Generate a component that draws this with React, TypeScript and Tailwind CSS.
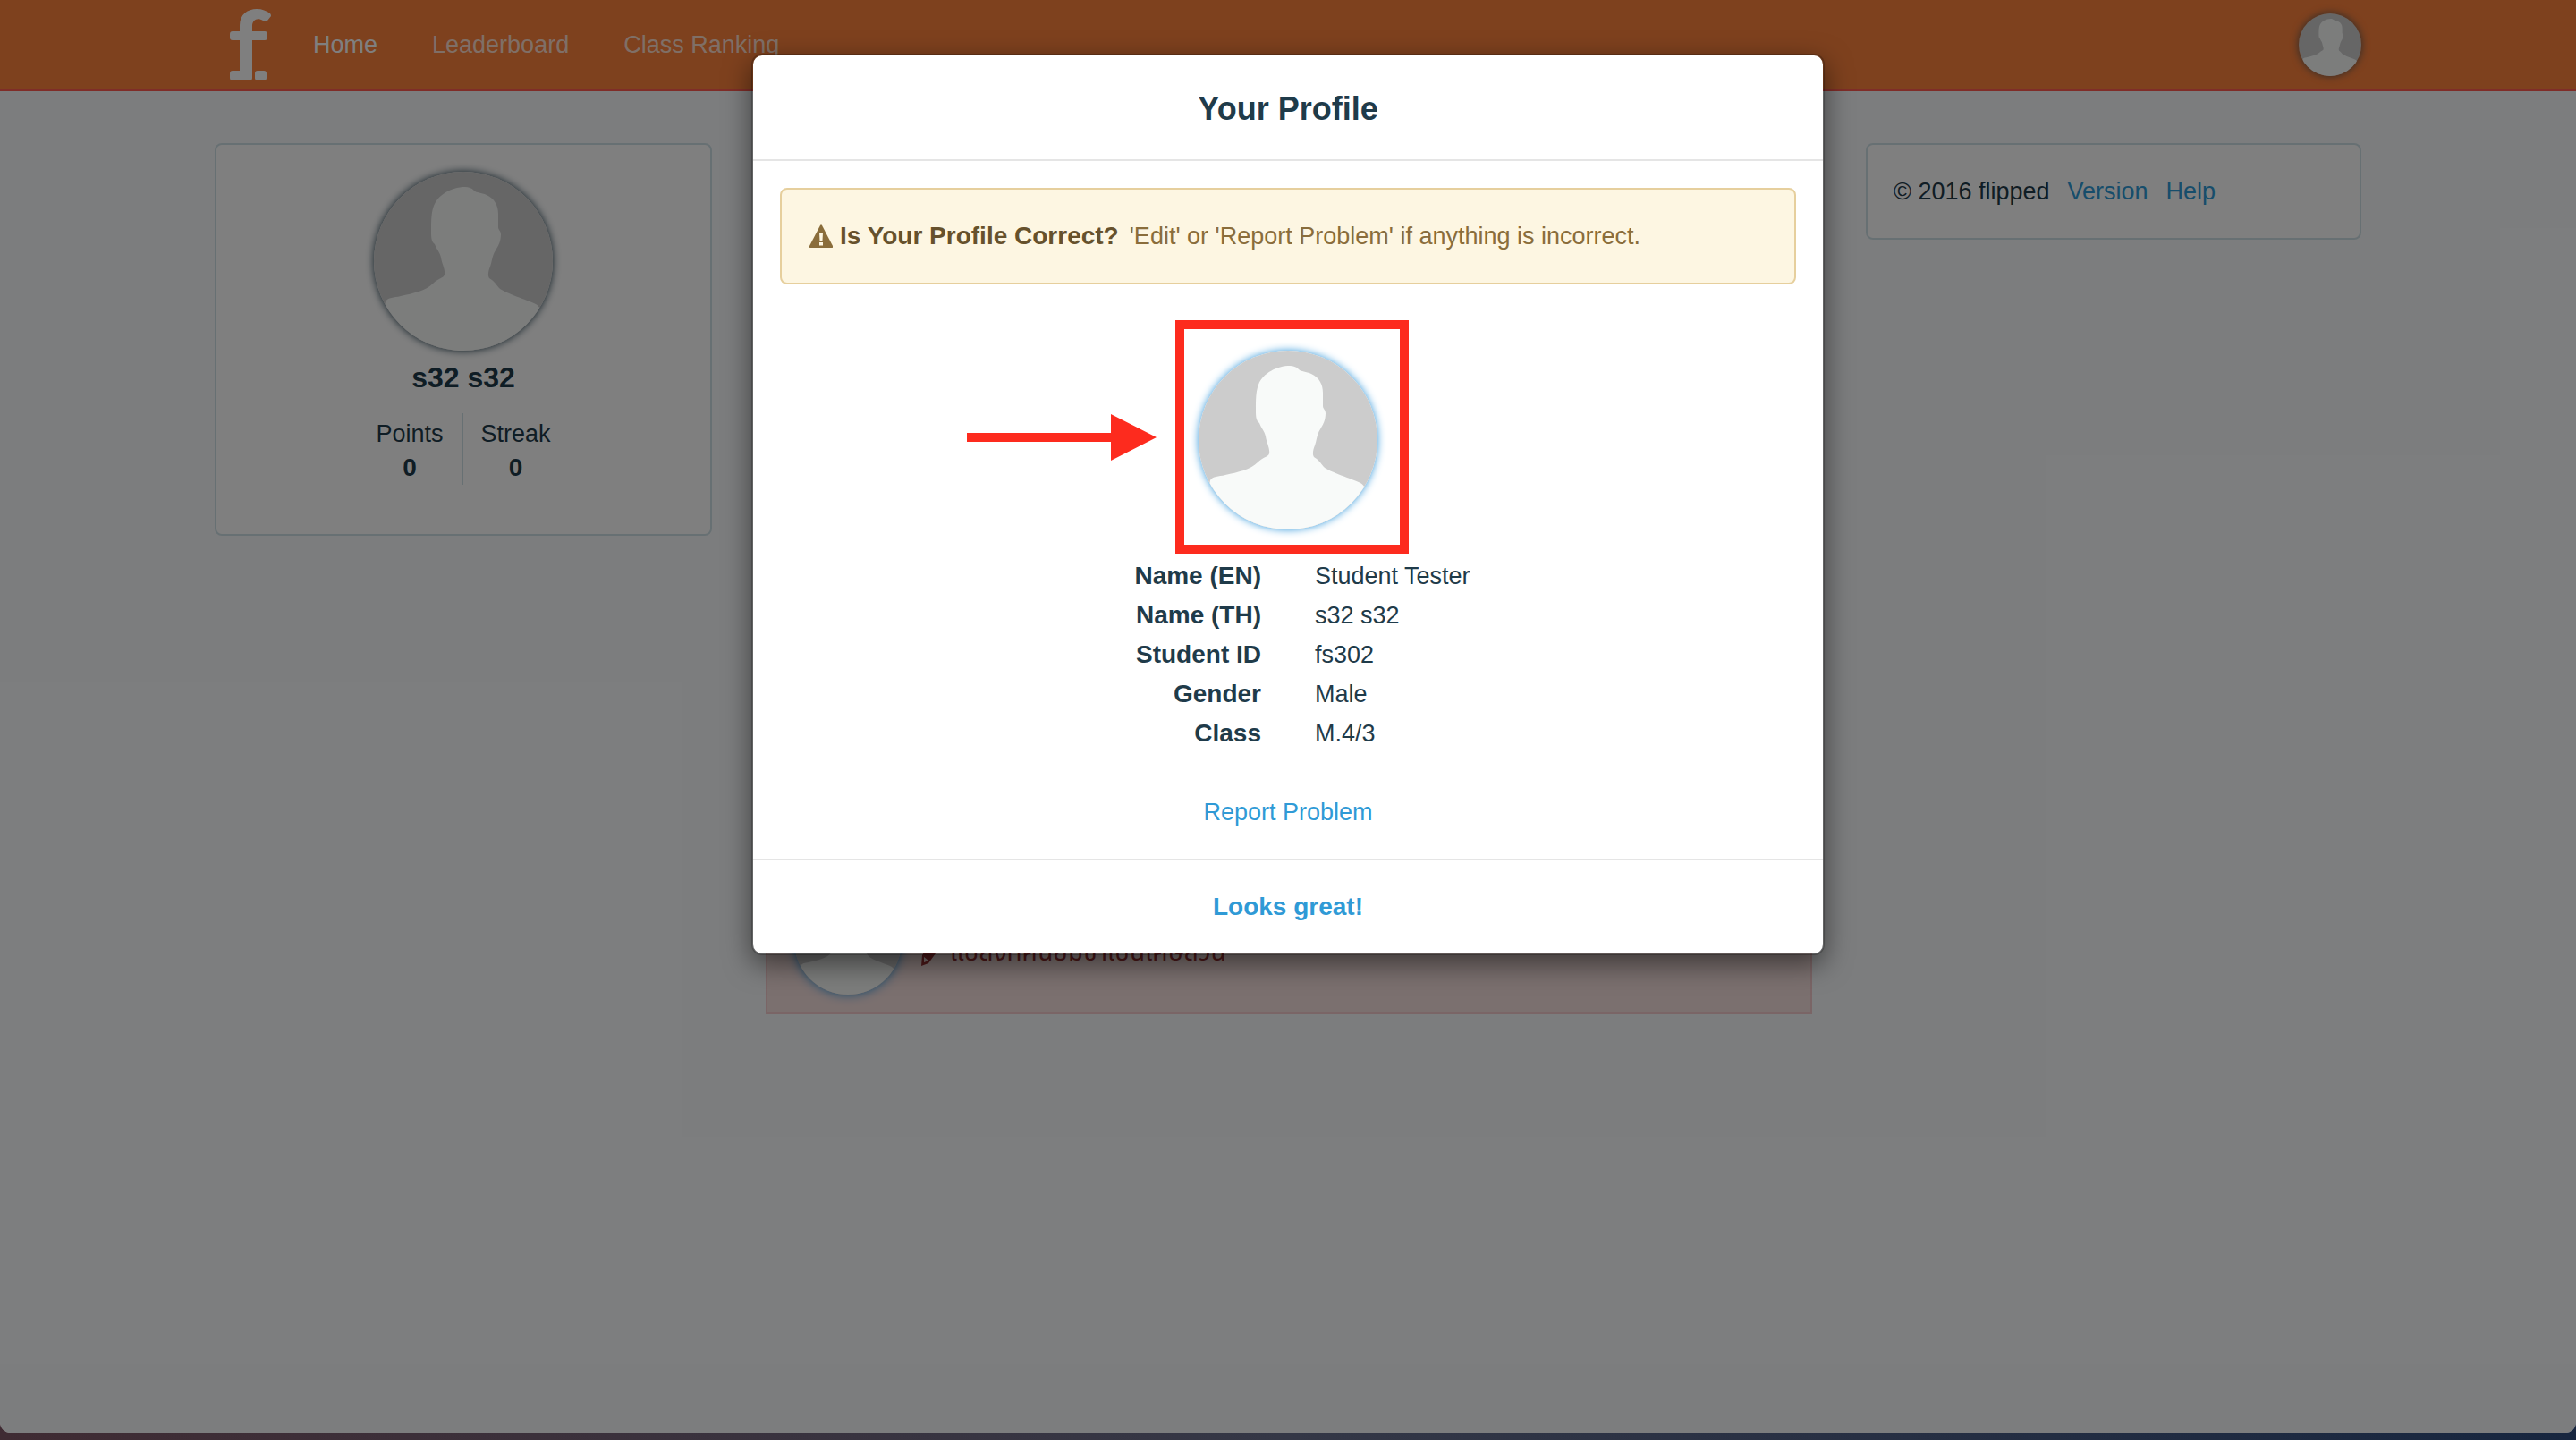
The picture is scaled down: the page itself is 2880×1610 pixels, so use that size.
import React from 'react';

function Avatar({ className }: { className: string }) {
  return (
    <svg viewBox="0 0 200 200" role="img" aria-label="Avatar" className={`block rounded-full ${className}`}>
      <rect width="200" height="200" fill="#cccccc" />
      <path
        fill="#f8faf9"
        d="M102 17 C106 17 109 18 112 21 C115 24 120 23 126 26 C135 30 139 38 139 47 V62 C139 65 142 66 142 70 C142 78 139 83 136 88 C132 94 132 101 130 106 C128 111 127 116 129 119 C133 121 137 126 140 130 C147 136 171 143 181 148 C190 153 190 170 195 200 H5 C8 180 10 160 13 145 C16 140 22 141 30 139 C44 136 58 133 66 125 C72 119 78 119 79 115 C80 109 76 103 75 96 C74 90 70 87 68 81 C64 78 64 73 64 66 C64 55 64 46 67 38 C72 25 88 17 102 17 Z"
      />
    </svg>
  );
}

function Logo() {
  return (
    <svg viewBox="0 0 46 80" aria-hidden="true" className="block h-[80px] w-[46px]" fill="#ffffff">
      <path d="M11 25 V18 C11 6 20 0 30 0 C36 0 41 2 45 5 Q46 6 46 8 L42 13 Q40 15 37 13 C31 9 25 12 25 19 V25 H39 Q42 25 42 28 V32 Q42 35 39 35 H25 V77 Q25 80 22 80 H3 Q0 80 0 77 V72 Q0 69 3 69 H11 V35 H3 Q0 35 0 32 V28 Q0 25 3 25 Z" />
      <rect x="28" y="69" width="13" height="11" rx="3" />
    </svg>
  );
}

const profile = [
  ['Name (EN)', 'Student Tester'],
  ['Name (TH)', 's32 s32'],
  ['Student ID', 'fs302'],
  ['Gender', 'Male'],
  ['Class', 'M.4/3'],
];

export default function App() {
  return (
    <div className="min-h-screen bg-gradient-to-r from-[#3f2b33] via-[#343746] to-[#17263f] font-['Liberation_Sans',Arial,sans-serif] text-[27px] leading-[44px] text-[#1f3b4a]">
      <div className="relative flex min-h-[calc(100vh-8px)] flex-col overflow-hidden rounded-b-[12px] bg-[#f9fbfd]">
        <header className="border-b-2 border-[#ff5a50] bg-[#fd823c]">
          <div className="mx-auto flex h-[100px] max-w-[2400px] items-center">
            <a href="#" aria-label="flipped" className="mr-[47px] ml-[17px]">
              <Logo />
            </a>
            <nav className="flex flex-1 gap-[61px] text-white/75">
              <a href="#" className="text-white">Home</a>
              <a href="#">Leaderboard</a>
              <a href="#">Class Ranking</a>
            </nav>
            <button type="button" aria-label="Account" className="rounded-full">
              <Avatar className="h-[70px] w-[70px] shadow-[0_0_10px_#555]" />
            </button>
          </div>
        </header>

        <main className="mx-auto mt-[58px] grid w-full max-w-[2400px] grid-cols-[556px_1fr_554px] items-start gap-[60px]">
          <section className="flex flex-col items-center rounded-[8px] border-2 border-[#cfe0e6] bg-white pt-[30px] pb-[55px]">
            <Avatar className="h-[200px] w-[200px] shadow-[0_0_10px_#1f3b4a]" />
            <h2 className="mt-[8px] text-[32px] leading-[44px] font-bold">s32 s32</h2>
            <div className="mt-[18px] flex text-center leading-[38px]">
              <div className="px-[20px] pt-[4px]">
                <div>Points</div>
                <div className="text-[28px] font-bold">0</div>
              </div>
              <div className="border-l-2 border-[#cfe0e6] px-[20px] pt-[4px]">
                <div>Streak</div>
                <div className="text-[28px] font-bold">0</div>
              </div>
            </div>
          </section>

          <section className="mt-[802px] flex border-2 border-[#f5cbcd] bg-[#f6e0df] px-[30px] pt-[28px] pb-[20px] text-[#9b3233]">
            <Avatar className="h-[120px] w-[120px] shadow-[0_0_12px_#3498db]" />
            <div className="ml-[22px] flex items-center gap-[16px] self-end pb-[24px]">
              <svg viewBox="0 0 16 28" aria-hidden="true" className="h-[28px] w-[16px]" fill="currentColor">
                <path d="M0 28 L1 16 L10 2 L16 5 L16 14 L8 25 Z M3 18 L3 24 L8 22 Z" fillRule="evenodd" />
              </svg>
              <span className="font-['Noto_Sans_Thai','Liberation_Sans',sans-serif] text-[28px]">แปลงทศนิยมซ้ำเป็นเศษส่วน</span>
            </div>
          </section>

          <footer className="flex gap-[20px] rounded-[8px] border-2 border-[#cfe0e6] bg-white px-[29px] py-[30px]">
            <span>© 2016 flipped</span>
            <a href="#" className="text-[#2f9ad6]">Version</a>
            <a href="#" className="text-[#2f9ad6]">Help</a>
          </footer>
        </main>

        <div className="absolute inset-0 bg-black/50">
          <div role="dialog" aria-modal="true" aria-labelledby="profile-title" className="mx-auto mt-[60px] w-full max-w-[1200px] rounded-[12px] border-2 border-black/20 bg-white bg-clip-padding shadow-[0_10px_30px_rgba(0,0,0,0.5)]">
            <div className="border-b-2 border-[#e5e5e5] pt-[32px] pb-[28px] text-center">
              <h1 id="profile-title" className="text-[36px] leading-[56px] font-bold">Your Profile</h1>
            </div>
            <div className="p-[30px]">
              <div role="alert" className="flex items-center rounded-[8px] border-2 border-[#e6cf9d] bg-[#fdf6e2] px-[31px] py-[30px] text-[#8a6d3b]">
                <svg viewBox="0 0 26 26" aria-hidden="true" className="mr-[8px] h-[26px] w-[26px]">
                  <path fill="currentColor" d="M12 1 Q13 -0.5 14 1 L26 24 Q26.5 26 25 26 H1 Q-0.5 26 0 24 Z" />
                  <path fill="#fdf6e2" d="M11 9 H15 L14.5 18 H11.5 Z M11 20 H15 V23.5 H11 Z" />
                </svg>
                <strong className="mr-[12px] text-[28px] text-[#66512c]">Is Your Profile Correct?</strong>
                <span>'Edit' or 'Report Problem' if anything is incorrect.</span>
              </div>

              <div className="relative mx-auto mt-[74px] mb-[30px] w-[200px]">
                <Avatar className="h-[200px] w-[200px] shadow-[0_0_10px_#3498db]" />
                <div className="absolute -top-[34px] -left-[26px] h-[261px] w-[261px] border-[10px] border-[#fd2b1e]" />
                <svg viewBox="0 0 212 52" aria-hidden="true" className="absolute top-[71px] -left-[259px] h-[52px] w-[212px]" fill="#fd2b1e">
                  <path d="M0 21 H161 V0 L212 26 L161 52 V31 H0 Z" />
                </svg>
              </div>

              <dl className="grid grid-cols-[1fr_1fr] gap-x-[60px]">
                {profile.map(([label, value]) => (
                  <React.Fragment key={label}>
                    <dt className="text-right text-[28px] font-bold">{label}</dt>
                    <dd>{value}</dd>
                  </React.Fragment>
                ))}
              </dl>

              <div className="mt-[44px] text-center">
                <a href="#" className="text-[#2f9ad6]">Report Problem</a>
              </div>
            </div>
            <div className="border-t-2 border-[#e5e5e5] py-[30px] text-center">
              <button type="button" className="block w-full text-[28px] leading-[44px] font-bold text-[#2f9ad6]">Looks great!</button>
            </div>
          </div>
        </div>
      </div>
    </div>
  );
}
